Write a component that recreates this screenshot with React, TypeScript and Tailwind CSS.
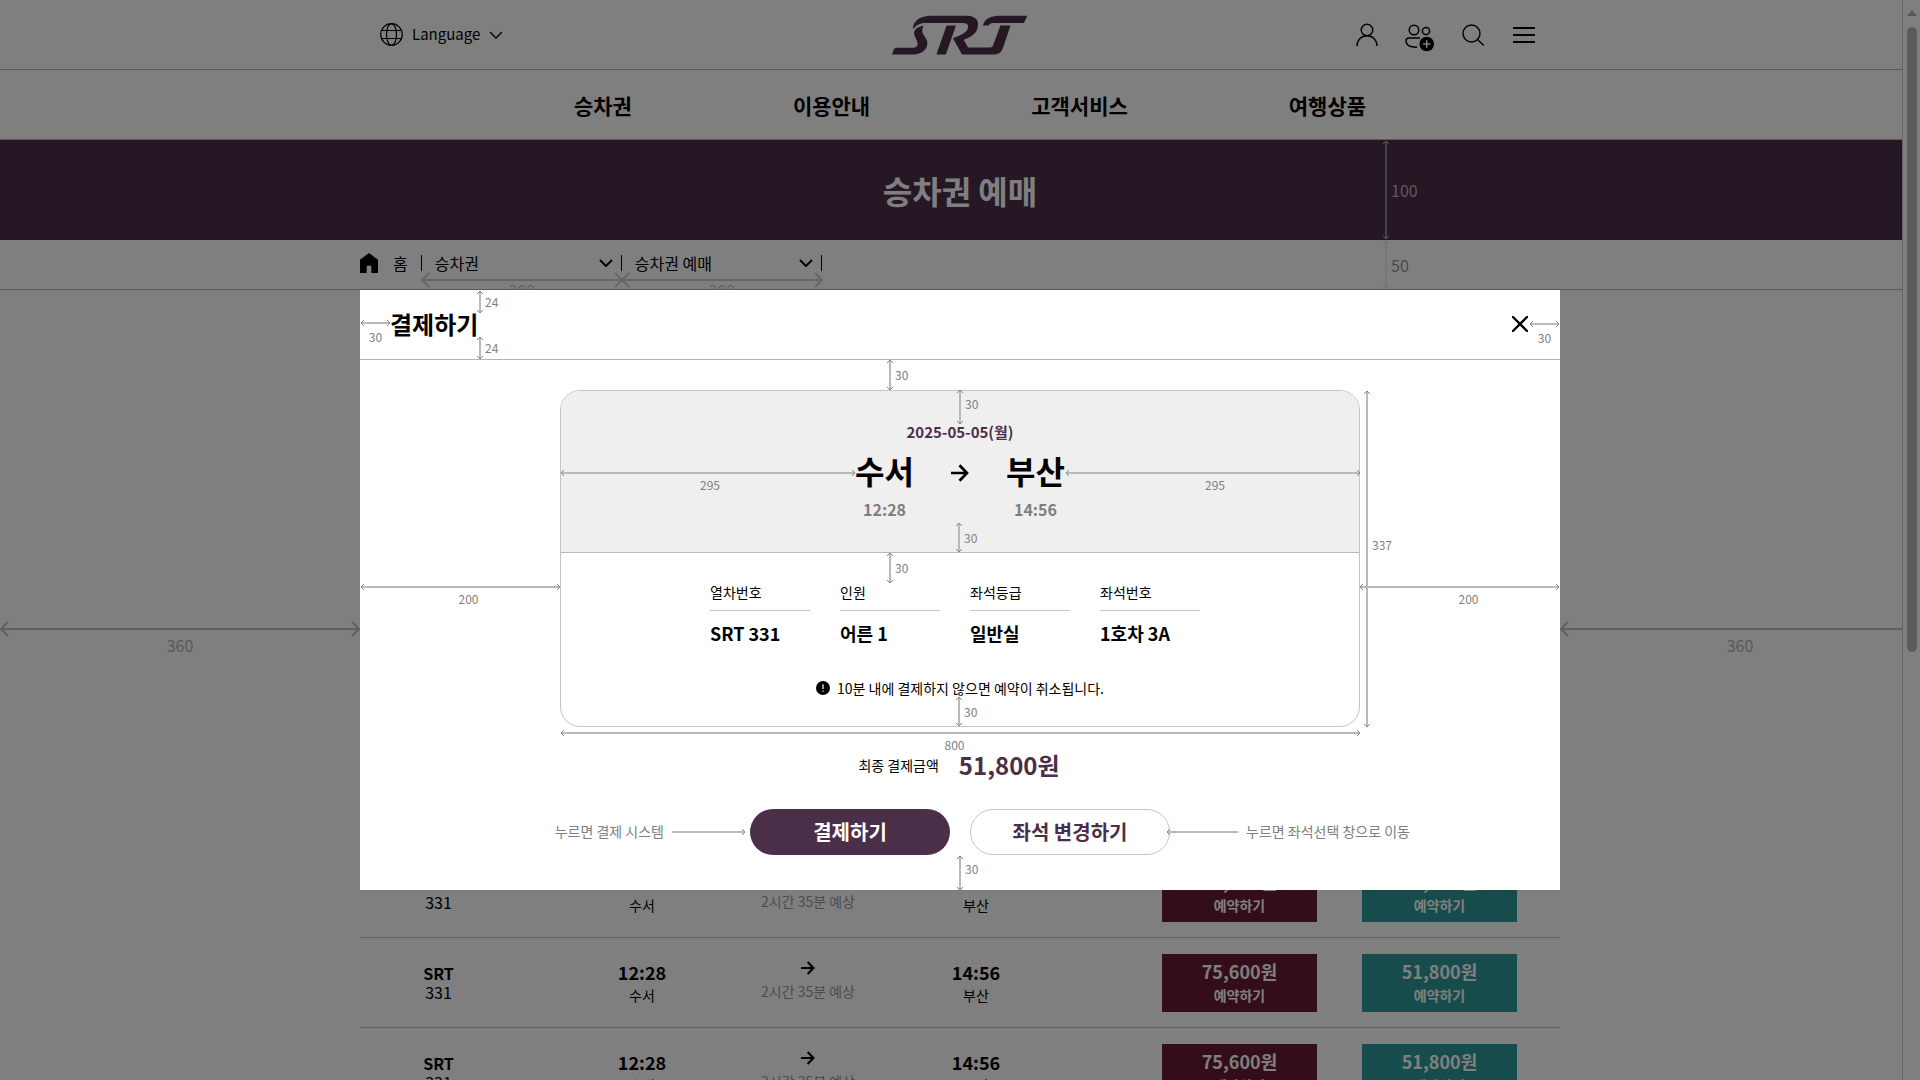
import React from 'react';

type Heads = 'both' | 'start' | 'end';

function Arrow({ dir, len, heads = 'both', tone = '#b9b9b9', tip = '#858585', head = 3, className = '' }: {
  dir: 'h' | 'v'; len: number; heads?: Heads; tone?: string; tip?: string; head?: number; className?: string;
}) {
  const c = head + 1;
  const box = c * 2;
  const start = dir === 'h' ? `M${1 + head} ${c - head}L1 ${c}L${1 + head} ${c + head}` : `M${c - head} ${1 + head}L${c} 1L${c + head} ${1 + head}`;
  const e = len - 1;
  const end = dir === 'h' ? `M${e - head} ${c - head}L${e} ${c}L${e - head} ${c + head}` : `M${c - head} ${e - head}L${c} ${e}L${c + head} ${e - head}`;
  return (
    <svg className={className} width={dir === 'h' ? len : box} height={dir === 'h' ? box : len} fill="none" aria-hidden="true">
      <path d={dir === 'h' ? `M1 ${c}H${e}` : `M${c} 1V${e}`} stroke={tone} strokeWidth={2} />
      {heads !== 'end' && <path d={start} stroke={tip} strokeWidth={head > 4 ? 2 : 1} />}
      {heads !== 'start' && <path d={end} stroke={tip} strokeWidth={head > 4 ? 2 : 1} />}
    </svg>
  );
}

function Gap({ len, label, className, labelClass = '' }: { len: number; label: string; className: string; labelClass?: string }) {
  return (
    <div className={`absolute flex items-center gap-px text-xs text-[#808080] ${className}`}>
      <Arrow dir="v" len={len} />
      <span className={labelClass}>{label}</span>
    </div>
  );
}

function Span({ len, label, className, labelClass = '' }: { len: number; label: string; className: string; labelClass?: string }) {
  return (
    <div className={`absolute flex flex-col items-center text-xs text-[#808080] ${className}`}>
      <Arrow dir="h" len={len} />
      <span className={labelClass}>{label}</span>
    </div>
  );
}

function RightArrow({ size }: { size: number }) {
  return (
    <svg width={size} height={size} viewBox="0 0 18 18" fill="none" stroke="#000" strokeWidth="2.7" aria-hidden="true">
      <path d="M0 9H16M8.5 1.2L16 9L8.5 16.8" />
    </svg>
  );
}

function Chevron({ bold = false }: { bold?: boolean }) {
  return (
    <svg width="14" height="8" viewBox="0 0 14 8" fill="none" stroke="#000" strokeWidth={bold ? 2 : 1.4} aria-hidden="true">
      <path d="M1 1L7 7L13 1" />
    </svg>
  );
}

function Logo() {
  return (
    <svg width="136" height="40" viewBox="96 44 404 118" fill="#4c2f48" role="img" aria-label="SRT">
      <path d="M158 86C158 60 180 47 212 46H320C345 47 354 60 351 78C348 98 333 109 309 117L322 140H388C393 140 395 138 397 132L418 75H448L428 135C422 153 415 161 398 161H304L277 113L300 103C315 97 322 88 322 78C322 70 316 67 306 67H196C178 67 167 74 158 86Z" />
      <path d="M190 75C170 80 160 88 162 100C164 112 172 118 172 130C172 138 166 141 158 141H110C104 141 101 145 100 150L96 161H158C186 160 200 146 201 128C202 114 188 106 186 92C186 84 188 80 190 75Z" />
      <path d="M258 75H286L256 161H228Z" />
      <path d="M366 75C371 56 388 46 414 46H498L488 67H406C390 67 386 68 383 75Z" />
    </svg>
  );
}

function Header() {
  return (
    <header>
      <div className="h-[70px] border-b border-[#b4b4b4]">
        <div className="mx-auto grid h-full max-w-[1160px] grid-cols-[1fr_auto_1fr] items-center">
          <button type="button" className="flex items-center gap-[9px] justify-self-start">
            <svg width="23" height="23" viewBox="0 0 23 23" fill="none" stroke="#000" strokeWidth="1.2" aria-hidden="true">
              <circle cx="11.5" cy="11.5" r="10.8" />
              <ellipse cx="11.5" cy="11.5" rx="5" ry="10.8" />
              <path d="M1.5 7.5H21.5M1.5 15.5H21.5" />
            </svg>
            <span className="pb-0.5 text-[15px] leading-6">Language</span>
            <Chevron />
          </button>
          <a href="#" aria-label="SRT"><Logo /></a>
          <div className="flex items-center gap-[27px] justify-self-end pr-1">
            <button type="button" aria-label="로그인">
              <svg width="22" height="24" viewBox="0 0 22 24" fill="none" stroke="#000" strokeWidth="1.4" aria-hidden="true">
                <circle cx="11" cy="7" r="5.8" />
                <path d="M1 23C1 17 5 12.8 11 12.8S21 17 21 23" />
              </svg>
            </button>
            <button type="button" aria-label="회원가입">
              <svg width="30" height="34" viewBox="0 -6 30 34" fill="none" stroke="#000" strokeWidth="1.5" aria-hidden="true">
                <circle cx="9" cy="6" r="4.8" />
                <circle cx="21" cy="7" r="3.6" />
                <path d="M15 14H4C2 14 1 15 1 17C1 21 4 23.5 12 23.3" />
                <circle cx="21.7" cy="20" r="7.3" fill="#000" stroke="none" />
                <path d="M21.7 16.2V23.8M17.9 20H25.5" stroke="#fff" strokeWidth="1.6" />
              </svg>
            </button>
            <button type="button" aria-label="검색">
              <svg width="23" height="22" viewBox="0 0 23 22" fill="none" stroke="#000" strokeWidth="1.4" aria-hidden="true">
                <circle cx="9.5" cy="9.5" r="8.5" />
                <path d="M15.5 15.5L21.8 21.5" />
              </svg>
            </button>
            <button type="button" aria-label="전체 메뉴">
              <svg width="24" height="18" viewBox="0 0 24 18" stroke="#000" strokeWidth="2" aria-hidden="true">
                <path d="M1 2H23M1 9H23M1 16H23" />
              </svg>
            </button>
          </div>
        </div>
      </div>
      <nav className="flex h-[70px] items-center justify-center gap-[161px] border-b border-[#b4b4b4] pt-0.5 pl-5 text-[21px] font-bold">
        {['승차권', '이용안내', '고객서비스', '여행상품'].map((t) => <a key={t} href="#">{t}</a>)}
      </nav>
    </header>
  );
}

function Crumb({ label }: { label: string }) {
  return (
    <div className="relative flex w-[200px] items-center">
      <span className="h-4 w-px bg-black" />
      <select aria-label={label} defaultValue={label} className="ml-[13px] w-[150px] appearance-none bg-transparent leading-6">
        <option>{label}</option>
      </select>
      <span className="ml-auto pr-2"><Chevron bold /></span>
      <div className="absolute top-[21px] left-0 flex flex-col items-center text-base leading-6 text-[#c8c8c8]">
        <Arrow dir="h" len={202} head={7} tone="#cccccc" tip="#cccccc" />
        <span className="-mt-2.5">200</span>
      </div>
    </div>
  );
}

function PageHeading() {
  return (
    <>
      <div className="relative flex h-[100px] items-center justify-center bg-[#4b2e48]">
        <h1 className="text-[32px] font-bold text-white">승차권 예매</h1>
        <div className="absolute top-0 left-1/2 ml-[422px] flex items-center gap-px text-base text-[#bdb0bb]">
          <Arrow dir="v" len={100} tone="#8f8290" tip="#bdb0bb" />
          <span>100</span>
        </div>
      </div>
      <div className="relative h-[50px] border-b border-[#b4b4b4]">
        <div className="mx-auto flex h-full max-w-[1200px] items-center pb-1">
          <a href="#" className="mr-[13px] flex items-center gap-[15px]">
            <svg width="18" height="20" viewBox="0 0 54 60" aria-hidden="true">
              <path d="M0 20L27 0L54 20V60H34V38H20V60H0Z" />
            </svg>
            <span>홈</span>
          </a>
          <Crumb label="승차권" />
          <Crumb label="승차권 예매" />
          <span className="h-4 w-px bg-black" />
        </div>
        <div className="absolute top-0 left-1/2 ml-[422px] flex items-center gap-px text-base text-[#949494]">
          <Arrow dir="v" len={50} tone="#eeeeee" tip="#dcdcdc" />
          <span>50</span>
        </div>
      </div>
    </>
  );
}

function Fare({ price, className }: { price: string; className: string }) {
  return (
    <button type="button" className={`flex h-[58px] w-[155px] flex-col items-center justify-center font-bold text-white ${className}`}>
      <span className="text-lg leading-6">{price}</span>
      <span className="text-sm leading-6">예약하기</span>
    </button>
  );
}

function Trains() {
  return (
    <main className="relative pt-[557px]">
      <table className="mx-auto w-full max-w-[1200px] table-fixed border-collapse text-center">
        <colgroup>
          <col className="w-[157px]" /><col className="w-[250px]" /><col className="w-[82px]" /><col className="w-[254px]" /><col className="w-[234px]" /><col />
        </colgroup>
        <tbody>
          {[0, 1, 2].map((i) => (
            <tr key={i} className="h-[90px] border-b border-[#c4c4c4]">
              <td className="pt-0.5"><p className="leading-[19px] font-bold">SRT</p><p className="leading-[19px]">331</p></td>
              <td className="pt-0.5"><p className="text-lg leading-6 font-bold">12:28</p><p className="text-sm leading-[22px]">수서</p></td>
              <td className="pb-0.5">
                <div className="flex flex-col items-center gap-1.5 whitespace-nowrap">
                  <RightArrow size={14} />
                  <span className="text-sm leading-5 text-[#999999]">2시간 35분 예상</span>
                </div>
              </td>
              <td className="pt-0.5"><p className="text-lg leading-6 font-bold">14:56</p><p className="text-sm leading-[22px]">부산</p></td>
              <td className="pt-0.5 pl-[59px]"><Fare price="75,600원" className="bg-[#661a33]" /></td>
              <td className="pt-0.5 pl-[25px]"><Fare price="51,800원" className="bg-[#2e9898]" /></td>
            </tr>
          ))}
        </tbody>
      </table>
      <div className="absolute top-[331px] right-1/2 mr-[600px] flex flex-col items-center text-base text-[#b0b0b0]">
        <Arrow dir="h" len={360} head={7} tone="#bebebe" tip="#bebebe" />
        <span className="-mt-1">360</span>
      </div>
      <div className="absolute top-[331px] left-1/2 ml-[600px] flex flex-col items-center text-base text-[#b0b0b0]">
        <Arrow dir="h" len={360} head={7} tone="#bebebe" tip="#bebebe" />
        <span className="-mt-1">360</span>
      </div>
    </main>
  );
}

function Scrollbar() {
  return (
    <div className="absolute inset-y-0 right-0 flex w-[18px] flex-col items-center border-l border-[#cccccc] bg-white pt-2.5" aria-hidden="true">
      <svg width="10" height="6" viewBox="0 0 10 6" fill="#b4b4b4"><path d="M5 0L10 6H0Z" /></svg>
      <div className="mt-[11px] h-[625px] w-2.5 rounded-full bg-[#b4b4b4]" />
    </div>
  );
}

function Station({ name, time }: { name: string; time: string }) {
  return (
    <div className="flex flex-col items-center gap-[7px] font-bold">
      <span className="text-[32px] leading-10">{name}</span>
      <span className="leading-6 text-[#7f7f7f]">{time}</span>
    </div>
  );
}

const details = [
  ['열차번호', 'SRT 331'],
  ['인원', '어른 1'],
  ['좌석등급', '일반실'],
  ['좌석번호', '1호차 3A'],
];

function PaymentDialog() {
  return (
    <section role="dialog" aria-label="결제하기" className="relative w-[1200px] bg-white pb-[35px]">
      <div className="flex h-[70px] items-center justify-between border-b border-[#b4b4b4] pr-8 pb-0.5 pl-[30px]">
        <h2 className="text-2xl font-bold">결제하기</h2>
        <button type="button" aria-label="닫기">
          <svg width="16" height="16" viewBox="0 0 16 16" stroke="#000" strokeWidth="2.4" strokeLinecap="round" aria-hidden="true">
            <path d="M1 1L15 15M15 1L1 15" />
          </svg>
        </button>
      </div>

      <div className="mx-[200px] mt-[30px] overflow-hidden rounded-[20px] border border-[#c4c4c4]">
        <div className="flex flex-col items-center border-b border-[#b9b9b9] bg-[#efefef] pt-[29px] pb-[31px]">
          <p className="text-[15px] leading-6 font-bold text-[#4b2e48]">2025-05-05(월)</p>
          <div className="mt-1.5 flex gap-[37px]">
            <Station name="수서" time="12:28" />
            <span className="flex h-[46px] items-center"><RightArrow size={18} /></span>
            <Station name="부산" time="14:56" />
          </div>
        </div>
        <dl className="ml-[149px] flex gap-[30px] pt-[29px]">
          {details.map(([k, v]) => (
            <div key={k} className="w-[100px]">
              <dt className="border-b border-[#c4c4c4] pb-2 text-sm leading-5">{k}</dt>
              <dd className="mt-[9px] text-lg leading-[26px] font-bold whitespace-nowrap">{v}</dd>
            </div>
          ))}
        </dl>
        <p className="mt-8 mb-7 flex items-center justify-center gap-[7px] text-sm leading-5">
          <svg width="14" height="14" viewBox="0 0 14 14" aria-hidden="true">
            <circle cx="7" cy="7" r="7" />
            <path d="M7 3.3V8M7 9.4V10.8" stroke="#fff" strokeWidth="1.2" />
          </svg>
          10분 내에 결제하지 않으면 예약이 취소됩니다.
        </p>
      </div>

      <p className="mt-5 flex items-center justify-center gap-5 pr-0.5">
        <span className="text-sm">최종 결제금액</span>
        <strong className="text-2xl leading-9 font-bold text-[#4b2e48]">51,800원</strong>
      </p>

      <div className="mt-[26px] flex justify-center">
        <div className="relative flex gap-5 text-xl font-bold">
          <button type="button" className="h-[46px] w-[200px] rounded-full bg-[#4b2e48] text-white">결제하기</button>
          <button type="button" className="h-[46px] w-[200px] rounded-full border border-[#c4c4c4] text-[#4b2e48]">좌석 변경하기</button>
          <div className="absolute inset-y-0 right-full mr-1 flex items-center gap-[7px] text-sm font-normal whitespace-nowrap text-[#808080]">
            <span className="pb-0.5">누르면 결제 시스템</span>
            <Arrow dir="h" len={75} heads="end" />
          </div>
          <div className="absolute inset-y-0 left-full -ml-1 flex items-center gap-[7px] text-sm font-normal whitespace-nowrap text-[#808080]">
            <Arrow dir="h" len={73} heads="start" />
            <span className="pb-0.5">누르면 좌석선택 창으로 이동</span>
          </div>
        </div>
      </div>

      <Gap len={24} label="24" className="top-0 left-[116px]" />
      <Gap len={24} label="24" className="top-[46px] left-[116px]" />
      <Span len={31} label="30" className="top-[29px] left-0" labelClass="pt-0.5" />
      <Span len={31} label="30" className="top-[30px] right-0" labelClass="pt-0.5" />
      <Gap len={32} label="30" className="top-[69px] left-[526px]" />
      <Gap len={36} label="30" className="top-[99px] left-[596px]" labelClass="pb-1.5" />
      <Gap len={31} label="30" className="top-[232px] left-[595px]" />
      <Gap len={32} label="30" className="top-[262px] left-[526px]" />
      <Gap len={31} label="30" className="top-[406px] left-[595px]" />
      <Gap len={36} label="30" className="top-[565px] left-[596px]" labelClass="pb-2" />
      <Gap len={338} label="337" className="top-[100px] left-[1003px]" labelClass="pb-7" />
      <Span len={296} label="295" className="top-[179px] left-[200px]" labelClass="pl-1" />
      <Span len={296} label="295" className="top-[179px] right-[199px]" labelClass="pl-1" />
      <Span len={201} label="200" className="top-[293px] left-0" labelClass="pl-4" />
      <Span len={201} label="200" className="top-[293px] right-0" labelClass="pl-[18px]" />
      <Span len={801} label="800" className="top-[439px] left-[200px]" labelClass="pr-3" />
    </section>
  );
}

export default function App() {
  return (
    <div className="relative h-screen overflow-hidden bg-white font-['Noto_Sans_CJK_KR',sans-serif] text-base text-black">
      <Header />
      <PageHeading />
      <Trains />
      <Scrollbar />
      <div className="absolute inset-0 bg-black/50" />
      <div className="absolute inset-x-0 top-[290px] flex justify-center">
        <PaymentDialog />
      </div>
    </div>
  );
}
